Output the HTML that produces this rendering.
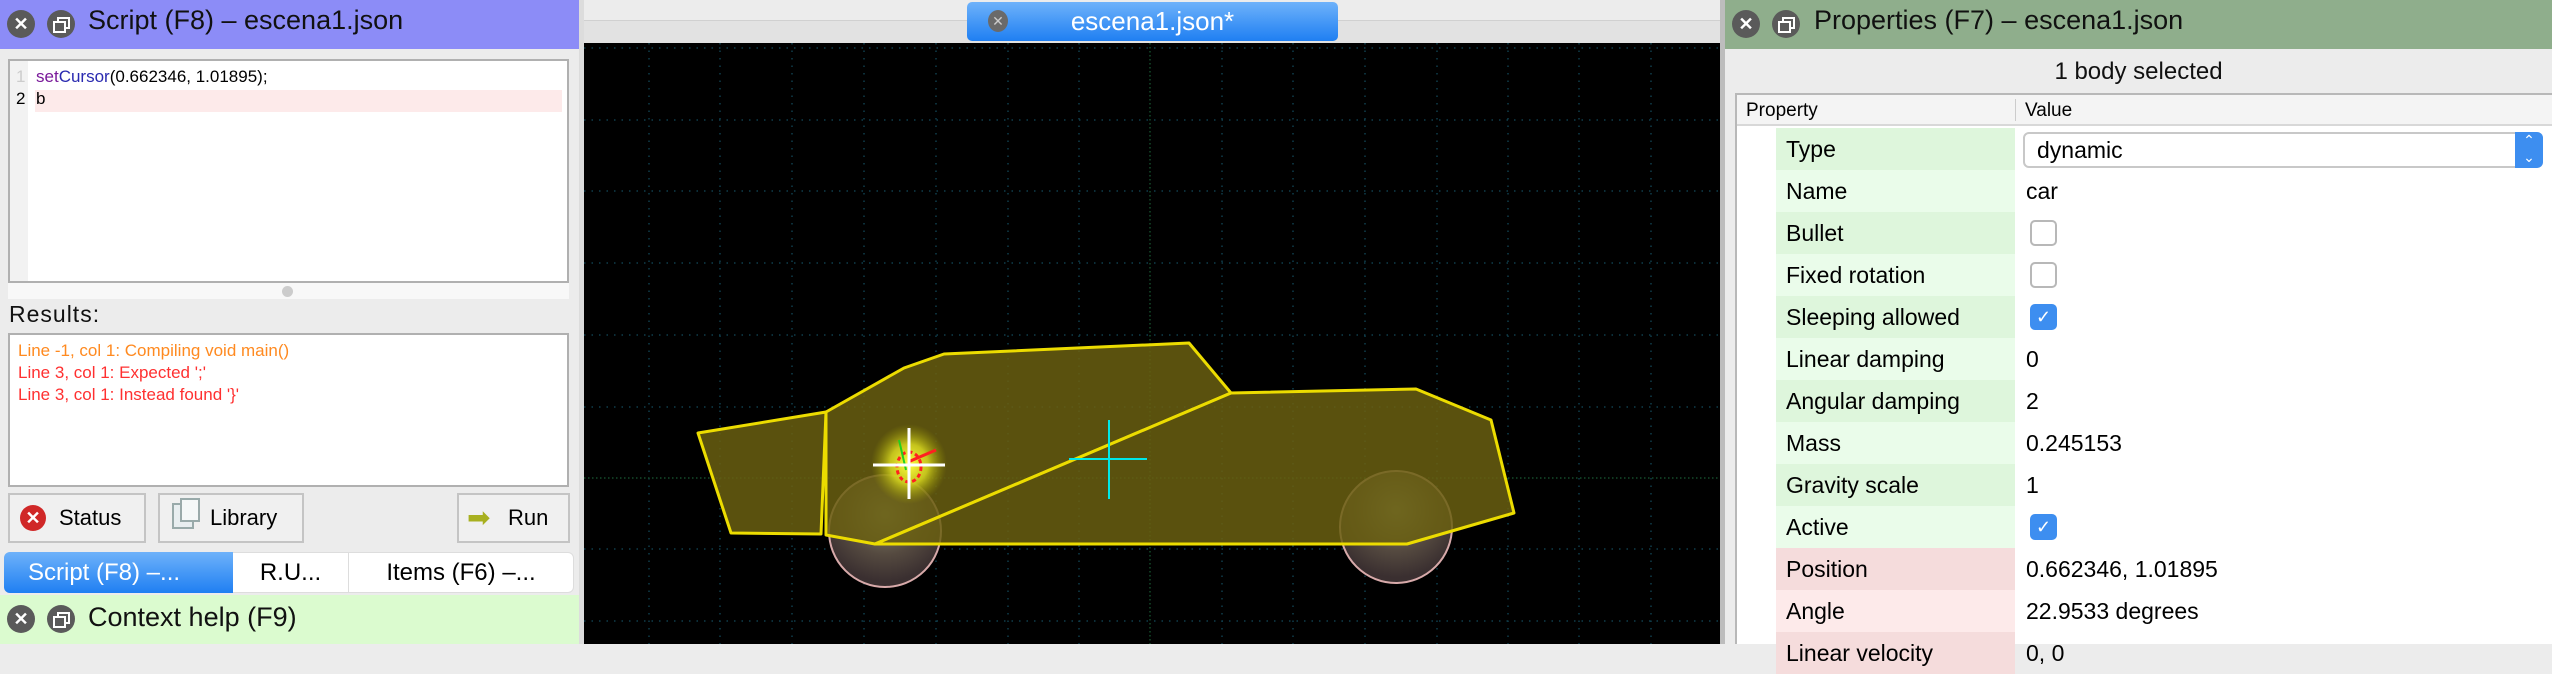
<!DOCTYPE html>
<html><head><meta charset="utf-8"><style>
*{margin:0;padding:0;box-sizing:border-box}
body{width:2552px;height:644px;overflow:hidden;background:#ececec;font-family:"Liberation Sans",sans-serif;position:relative}
.a{position:absolute}
.ic{position:absolute;width:28px;height:28px;border-radius:50%;background:#5a5a5a;color:#fff;font-size:18px;font-weight:bold;text-align:center;line-height:28px}
.rs{position:absolute;width:28px;height:28px;border-radius:50%;background:#5a5a5a}
.rs:before{content:"";position:absolute;left:10px;top:7px;width:9px;height:8px;border:2px solid #fff}
.rs:after{content:"";position:absolute;left:6px;top:11px;width:9px;height:8px;border:2px solid #fff;background:#5a5a5a}
.btn{position:absolute;top:493px;height:50px;border:2px solid #c4c4c4;background:#f0f0f0;font-size:22px;line-height:46px}
.row{position:absolute;left:1776px;width:776px;height:42px;font-size:23px;line-height:42px}
.row .l{position:absolute;left:0;top:0;width:239px;height:42px;padding-left:10px}
.row .v{position:absolute;left:250px;top:0}
.cb{position:absolute;left:254px;top:8px;width:27px;height:26px;border:2px solid #b8b8b8;border-radius:5px;background:#fff}
.cb.on{background:#3d8ef0;border-color:#3d8ef0;color:#fff;font-size:18px;line-height:22px;text-align:center}
</style></head><body>
<!-- LEFT PANEL -->
<div class="a" style="left:0;top:0;width:579px;height:49px;background:#8c8cf7"></div>
<div class="ic" style="left:7px;top:10px">✕</div>
<div class="rs" style="left:47px;top:10px"></div>
<div class="a" style="left:88px;top:5px;font-size:27px;color:#111">Script (F8) – escena1.json</div>
<div class="a" style="left:8px;top:59px;width:561px;height:224px;background:#fff;border:2px solid #b0b0b0"></div>
<div class="a" style="left:10px;top:61px;width:18px;height:220px;background:#f2f2f2"></div>
<div class="a" style="left:35px;top:90px;width:527px;height:22px;background:#fdeaea"></div>
<div class="a" style="left:16px;top:67px;font-size:17px;color:#ccc">1</div>
<div class="a" style="left:16px;top:89px;font-size:17px;color:#000">2</div>
<div class="a" style="left:36px;top:67px;font-size:17px;color:#000"><span style="color:#7a1a9a">set</span><span style="color:#2a2ab0">Cursor</span>(0.662346, 1.01895);</div>
<div class="a" style="left:36px;top:89px;font-size:17px;color:#000">b</div>
<div class="a" style="left:8px;top:283px;width:561px;height:16px;background:#f8f8f8"></div>
<div class="a" style="left:282px;top:286px;width:11px;height:11px;border-radius:50%;background:#ccc"></div>
<div class="a" style="left:9px;top:301px;font-size:23px;color:#111;letter-spacing:1px">Results:</div>
<div class="a" style="left:8px;top:333px;width:561px;height:154px;background:#fff;border:2px solid #b0b0b0"></div>
<div class="a" style="left:18px;top:340px;font-size:17px;line-height:22px;color:#ff3030">
<div style="color:#ff8a20">Line -1, col 1: Compiling void main()</div>
<div>Line 3, col 1: Expected ';'</div>
<div>Line 3, col 1: Instead found '}'</div></div>
<div class="btn" style="left:8px;width:138px"><span class="a" style="left:10px;top:10px;width:26px;height:26px;border-radius:50%;background:#d02828;color:#fff;font-size:18px;line-height:26px;text-align:center;font-weight:bold">✕</span><span class="a" style="left:49px;top:0">Status</span></div>
<div class="btn" style="left:158px;width:146px"><span class="a" style="left:12px;top:8px;width:22px;height:26px;border:2px solid #9aa;background:#e8eef0"></span><span class="a" style="left:20px;top:3px;width:20px;height:24px;border:2px solid #9aa;background:#f4f8f8"></span><span class="a" style="left:50px;top:0">Library</span></div>
<div class="btn" style="left:457px;width:113px"><span class="a" style="left:8px;top:0;color:#a8b020;font-size:28px">➡</span><span class="a" style="left:49px;top:0">Run</span></div>
<div class="a" style="left:4px;top:552px;width:570px;height:41px;background:#fff;border-radius:6px;border:1px solid #ddd"></div>
<div class="a" style="left:4px;top:552px;width:229px;height:41px;background:linear-gradient(#6eb2fa,#1f7ff2);border-radius:6px 0 0 6px;color:#fff;font-size:24px;line-height:41px;padding-left:24px">Script (F8) –...</div>
<div class="a" style="left:233px;top:552px;width:116px;height:41px;font-size:24px;line-height:41px;text-align:center;border-right:1px solid #ddd">R.U...</div>
<div class="a" style="left:349px;top:552px;width:224px;height:41px;font-size:24px;line-height:41px;text-align:center">Items (F6) –...</div>
<div class="a" style="left:0;top:595px;width:579px;height:49px;background:#dbfbcf"></div>
<div class="ic" style="left:7px;top:605px">✕</div>
<div class="rs" style="left:47px;top:605px"></div>
<div class="a" style="left:88px;top:602px;font-size:27px;color:#111">Context help (F9)</div>
<div class="a" style="left:579px;top:0;width:5px;height:644px;background:#dcdcdc"></div>
<!-- CENTER -->
<div class="a" style="left:584px;top:20px;width:1136px;height:24px;background:#e2e2e2;border-top:1px solid #d0d0d0"></div>
<div class="a" style="left:967px;top:2px;width:371px;height:39px;background:linear-gradient(#6eb2fa,#1f7ff2);border-radius:5px;color:#fff;font-size:26px;line-height:38px;text-align:center">escena1.json*</div>
<div class="a" style="left:988px;top:10px;width:20px;height:22px;border-radius:50%;background:#6a6a6a;color:#ccc;font-size:14px;line-height:22px;text-align:center">✕</div>
<svg class="a" style="left:584px;top:43px" width="1136" height="601" viewBox="584 43 1136 601">
<rect x="584" y="43" width="1136" height="601" fill="#000"/>
<g stroke="#0f3e4c" stroke-width="1.5" stroke-dasharray="1.5 6">
<line x1="584" y1="48" x2="1720" y2="48"/><line x1="584" y1="120" x2="1720" y2="120"/><line x1="584" y1="191" x2="1720" y2="191"/><line x1="584" y1="263" x2="1720" y2="263"/><line x1="584" y1="335" x2="1720" y2="335"/><line x1="584" y1="407" x2="1720" y2="407"/><line x1="584" y1="549" x2="1720" y2="549"/><line x1="584" y1="621" x2="1720" y2="621"/>
<line x1="649" y1="43" x2="649" y2="644"/><line x1="720" y1="43" x2="720" y2="644"/><line x1="792" y1="43" x2="792" y2="644"/><line x1="864" y1="43" x2="864" y2="644"/><line x1="936" y1="43" x2="936" y2="644"/><line x1="1008" y1="43" x2="1008" y2="644"/><line x1="1079" y1="43" x2="1079" y2="644"/><line x1="1222" y1="43" x2="1222" y2="644"/><line x1="1293" y1="43" x2="1293" y2="644"/><line x1="1365" y1="43" x2="1365" y2="644"/><line x1="1437" y1="43" x2="1437" y2="644"/><line x1="1508" y1="43" x2="1508" y2="644"/><line x1="1579" y1="43" x2="1579" y2="644"/><line x1="1651" y1="43" x2="1651" y2="644"/>
</g>
<g stroke="#144a2a" stroke-width="1.5" stroke-dasharray="1.5 2.5"><line x1="584" y1="478" x2="1720" y2="478"/><line x1="1150" y1="43" x2="1150" y2="644"/></g>
<defs><radialGradient id="w" cx="0.5" cy="0.35" r="0.6"><stop offset="0" stop-color="#8a8a70"/><stop offset="0.6" stop-color="#554a40"/><stop offset="1" stop-color="#3a2f30"/></radialGradient>
<radialGradient id="g"><stop offset="0" stop-color="#ffff40"/><stop offset="0.5" stop-color="#e0e020" stop-opacity="0.8"/><stop offset="1" stop-color="#a0a000" stop-opacity="0"/></radialGradient></defs>
<circle cx="885" cy="531" r="56" fill="url(#w)" stroke="#d8aaaa" stroke-width="2"/>
<circle cx="1396" cy="527" r="56" fill="url(#w)" stroke="#d8aaaa" stroke-width="2"/>
<g fill="#6a5f10" fill-opacity="0.85" stroke="#ecdc00" stroke-width="3" stroke-linejoin="round">
<polygon points="698,433 826,412 821,534 731,533"/>
<polygon points="826,412 904,368 944,354 1189,343 1231,393 875,544 826,535"/>
<polygon points="1231,393 1416,389 1491,420 1514,513 1407,544 875,544"/>
</g>
<ellipse cx="909" cy="464" rx="38" ry="40" fill="url(#g)"/>
<ellipse cx="909" cy="467" rx="12" ry="15" fill="none" stroke="#ff2020" stroke-width="3" stroke-dasharray="4 3"/>
<line x1="899" y1="440" x2="906" y2="470" stroke="#20d020" stroke-width="2"/>
<line x1="908" y1="462" x2="936" y2="450" stroke="#ff2020" stroke-width="3"/>
<line x1="873" y1="465" x2="945" y2="465" stroke="#fff" stroke-width="3"/>
<line x1="909" y1="428" x2="909" y2="499" stroke="#fff" stroke-width="3"/>
<line x1="1069" y1="459" x2="1147" y2="459" stroke="#00e8e8" stroke-width="2"/>
<line x1="1109" y1="420" x2="1109" y2="499" stroke="#00e8e8" stroke-width="2"/>
</svg>
<!-- RIGHT PANEL -->
<div class="a" style="left:1720px;top:0;width:5px;height:644px;background:#bdbdbd"></div>
<div class="a" style="left:1725px;top:0;width:827px;height:49px;background:#8fae8c"></div>
<div class="ic" style="left:1732px;top:10px">✕</div>
<div class="rs" style="left:1772px;top:10px"></div>
<div class="a" style="left:1814px;top:5px;font-size:27px;color:#111">Properties (F7) – escena1.json</div>
<div class="a" style="left:1725px;top:58px;width:827px;text-align:center;font-size:24px;color:#111">1 body selected</div>
<div class="a" style="left:1735px;top:93px;width:817px;height:551px;background:#fff;border:2px solid #b8b8b8;border-right:none;border-bottom:none"></div>
<div class="a" style="left:1737px;top:95px;width:815px;height:31px;background:#f4f4f4;border-bottom:2px solid #d8d8d8;font-size:19px;line-height:31px"><span class="a" style="left:9px">Property</span><span class="a" style="left:278px;top:4px;height:22px;border-left:1px solid #ccc"></span><span class="a" style="left:288px">Value</span></div>
<div class="row" style="top:128px"><div class="l" style="background:#def6dc">Type</div><div class="a" style="left:247px;top:4px;width:520px;height:36px;border:2px solid #c8c8c8;border-radius:6px;background:#fff;padding-left:12px;line-height:32px">dynamic<span class="a" style="right:-2px;top:-2px;width:28px;height:36px;background:#3d8ef0;border-radius:0 6px 6px 0;color:#fff;font-size:14px;line-height:17px;text-align:center">⌃<br>⌄</span></div></div>
<div class="row" style="top:170px"><div class="l" style="background:#eafcea">Name</div><div class="v">car</div></div>
<div class="row" style="top:212px"><div class="l" style="background:#def6dc">Bullet</div><div class="cb"></div></div>
<div class="row" style="top:254px"><div class="l" style="background:#eafcea">Fixed rotation</div><div class="cb"></div></div>
<div class="row" style="top:296px"><div class="l" style="background:#def6dc">Sleeping allowed</div><div class="cb on">✓</div></div>
<div class="row" style="top:338px"><div class="l" style="background:#eafcea">Linear damping</div><div class="v">0</div></div>
<div class="row" style="top:380px"><div class="l" style="background:#def6dc">Angular damping</div><div class="v">2</div></div>
<div class="row" style="top:422px"><div class="l" style="background:#eafcea">Mass</div><div class="v">0.245153</div></div>
<div class="row" style="top:464px"><div class="l" style="background:#def6dc">Gravity scale</div><div class="v">1</div></div>
<div class="row" style="top:506px"><div class="l" style="background:#eafcea">Active</div><div class="cb on">✓</div></div>
<div class="row" style="top:548px"><div class="l" style="background:#f5dcdc">Position</div><div class="v">0.662346, 1.01895</div></div>
<div class="row" style="top:590px"><div class="l" style="background:#fdeaea">Angle</div><div class="v">22.9533 degrees</div></div>
<div class="row" style="top:632px"><div class="l" style="background:#f5dcdc">Linear velocity</div><div class="v">0, 0</div></div>
</body></html>
